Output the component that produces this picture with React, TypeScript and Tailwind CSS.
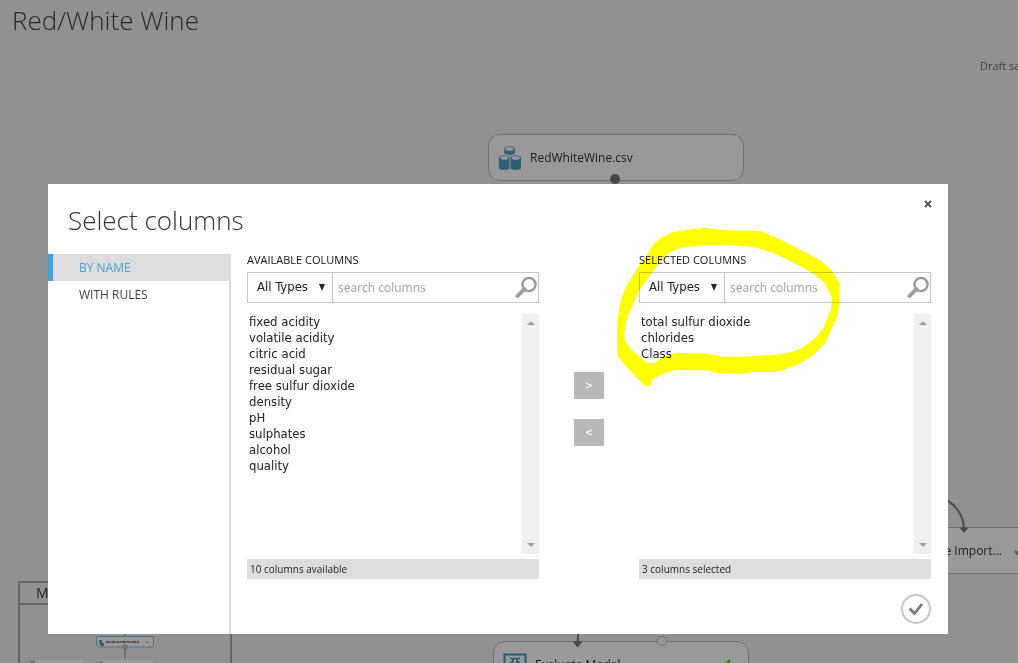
import React from "react";

const available = [
  "fixed acidity",
  "volatile acidity",
  "citric acid",
  "residual sugar",
  "free sulfur dioxide",
  "density",
  "pH",
  "sulphates",
  "alcohol",
  "quality",
];
const selected = ["total sulfur dioxide", "chlorides", "Class"];

function Cylinder({ x, y }: { x: number; y: number }) {
  return (
    <g transform={`translate(${x} ${y})`}>
      <path d="M0 3 C0 -.8 10.6 -.8 10.6 3 V13 C10.600 15.600 0 15.600 0 13Z" fill="#4f9fc4" />
      <ellipse cx="5.3" cy="2.9" rx="4.100" ry="1.800" fill="#fff" />
    </g>
  );
}

function DatasetIcon() {
  return (
    <svg width="24" height="25" viewBox="0 0 24 25" aria-hidden="true">
      <Cylinder x={6.3} y={1} />
      <path d="M0 12.500C0 8 12 8 12 11.500 12 8 24 8 24 12.500V17H0z" fill="#fff" />
      <Cylinder x={0.8} y={10} />
      <Cylinder x={12.4} y={10} />
    </svg>
  );
}

function EvaluateIcon() {
  return (
    <svg width="24" height="24" viewBox="0 0 24 24" fill="none" stroke="#3f97c3" aria-hidden="true">
      <rect x="1.5" y="1.5" width="21" height="21" strokeWidth="2" />
      <path d="M7 5.5h10M10 6v13M14 6v13M7 9h3M14 9h3" strokeWidth="1.6" />
    </svg>
  );
}

function GreenCheck() {
  return (
    <svg width="14" height="14" viewBox="0 0 14 14" aria-hidden="true">
      <path d="M1 7l4 4 8-9" fill="none" stroke="#77b81f" strokeWidth="2.6" />
    </svg>
  );
}

function Canvas() {
  return (
    <main className="absolute inset-0 overflow-hidden bg-[#f2f2f2]">
      <header>
        <h1 className="pl-3 text-[26px] leading-10 font-light text-[#444]">Red/White Wine</h1>
      </header>
      <p className="absolute top-[58px] left-[980px] text-[11px] leading-4 whitespace-nowrap text-[#666]">Draft sa</p>

      <div className="absolute top-[134px] left-[488px] flex h-[47px] w-64 items-center gap-2 rounded-xl border border-[#b8b8b8] bg-white pl-[9px] text-xs text-[#333]">
        <DatasetIcon />
        <span>RedWhiteWine.csv</span>
        <span className="absolute -bottom-1 left-[121px] size-[10px] rounded-full bg-[#777]" />
      </div>

      <div className="absolute top-[527px] left-[787px] flex h-[47px] w-64 items-center rounded-xl border border-[#b8b8b8] bg-white text-xs text-[#333]">
        <span className="ml-auto pr-[40px]">e Import...</span>
        <span className="absolute top-4 left-[226px]">
          <GreenCheck />
        </span>
      </div>
      <svg className="absolute top-[490px] left-[930px]" width="50" height="50" aria-hidden="true">
        <path d="M10 7C26 13 34 26 34 39" fill="none" stroke="#7d7d7d" strokeWidth="2" />
        <path d="M29.500 37.500h9L34 43z" fill="#777" />
      </svg>

      <div className="absolute top-[641px] left-[493px] flex h-[47px] w-64 items-center gap-2 rounded-xl border border-[#b8b8b8] bg-white pl-[9px] text-xs text-[#333]">
        <EvaluateIcon />
        <span>Evaluate Model</span>
        <span className="absolute -top-1.5 left-[163px] size-[10px] rounded-full border border-[#b5b5b5] bg-white" />
        <span className="absolute top-4 left-[223px]">
          <GreenCheck />
        </span>
      </div>
      <svg className="absolute top-[625px] left-[560px]" width="40" height="30" aria-hidden="true">
        <path d="M19 0L17.500 17" fill="none" stroke="#7d7d7d" strokeWidth="2" />
        <path d="M12.500 16.500h10L17.500 22.500z" fill="#777" />
      </svg>

      <section className="absolute top-[581px] left-[18px] h-[120px] w-[214px] border-2 border-[#aaa]">
        <h2 className="h-[22px] border-b-2 border-[#aaa] pl-4 text-sm leading-5 text-[#333]">M</h2>
        <svg width="210" height="60" viewBox="20 605 210 60" aria-hidden="true">
          <path d="M125 630v34" stroke="#aaa" strokeWidth="1.500" />
          <rect x="96.500" y="636.500" width="57" height="10.500" rx="2" fill="#fff" stroke="#8ab9d4" />
          <path d="M99 640h3v3h2v3h-4z" fill="#4f9fc4" />
          <path d="M106 642h33" stroke="#666" strokeWidth="1.700" strokeDasharray="3 .6 1.500 .5 4 .7" />
          <path d="M146 642l1 1 2-2" fill="none" stroke="#77b81f" />
          <circle cx="125" cy="647" r="2.300" fill="#eee" stroke="#999" />
          <circle cx="125" cy="647" r=".8" fill="#c66" />
          <rect x="28" y="659" width="57" height="12" rx="2" fill="#fff" stroke="#e5e5e5" />
          <rect x="97" y="659" width="57" height="12" rx="2" fill="#fff" stroke="#e5e5e5" />
          <path d="M30 661.500h5M99 662.500h4" stroke="#9bc" strokeWidth="2" />
        </svg>
      </section>
    </main>
  );
}

function ColumnPanel({ id, title, items, status }: { id: string; title: string; items: string[]; status: string }) {
  return (
    <section className="flex w-[292px] flex-col">
      <h3 className="h-[18px] text-[11px] leading-3 text-[#111]">{title}</h3>
      <div className="flex h-[31px]">
        <div className="relative w-[86px] shrink-0 border border-[#c6c6c6]">
          <select
            id={`${id}-type`}
            aria-label={`${title} type`}
            className="h-full w-full appearance-none bg-transparent pb-0.5 pl-[9px] font-['DejaVu_Sans_Condensed','Noto_Sans',sans-serif] text-[13px] text-[#222] outline-none"
          >
            <option>All Types</option>
          </select>
          <svg className="pointer-events-none absolute top-[11px] right-[7px]" width="6" height="7" aria-hidden="true">
            <path d="M0 0h6L3 7z" fill="#222" />
          </svg>
        </div>
        <div className="-ml-px flex min-w-0 flex-1 items-center border border-[#c6c6c6]">
          <input
            id={`${id}-search`}
            type="search"
            aria-label={`Search ${title}`}
            placeholder="search columns"
            className="min-w-0 flex-1 bg-transparent pl-[5px] text-xs outline-none placeholder:text-[#a0a0a0]"
          />
          <button type="button" aria-label="Search" className="mr-px">
            <svg width="22" height="23" viewBox="0 0 22 23" fill="none" stroke="#999" aria-hidden="true">
              <circle cx="14" cy="8.500" r="6.600" strokeWidth="2.400" />
              <path d="M9.500 13L2.500 20" strokeWidth="3.800" strokeLinecap="round" />
            </svg>
          </button>
        </div>
      </div>
      <div className="mt-[11px] flex h-60">
        <ul className="flex-1 pl-0.5 font-['DejaVu_Sans_Condensed','Noto_Sans',sans-serif] text-[13px] leading-4 text-[#222]">
          {items.map((item) => (
            <li key={item}>{item}</li>
          ))}
        </ul>
        <div className="flex w-[17px] flex-col items-center justify-between bg-[#f0f0f0] py-[7px]" aria-hidden="true">
          <svg width="8" height="4">
            <path d="M0 4L4 0l4 4z" fill="#a0a0a0" />
          </svg>
          <svg width="8" height="4">
            <path d="M0 0h8L4 4z" fill="#a0a0a0" />
          </svg>
        </div>
      </div>
      <p className="mt-[5px] h-5 bg-[#ddd] pl-[3px] text-[10px] leading-5 text-[#222]">{status}</p>
    </section>
  );
}

function Dialog() {
  return (
    <div role="dialog" aria-labelledby="dialog-title" className="relative flex min-h-[450px] w-full max-w-[900px] flex-col bg-white">
      <header className="flex h-[70px] items-start justify-between pr-4 pl-5">
        <h2 id="dialog-title" className="pt-4 text-[26px] leading-10 font-light text-[#333]">Select columns</h2>
        <button type="button" aria-label="Close" className="mt-4">
          <svg width="8" height="8" viewBox="0 0 8 8" aria-hidden="true">
            <path d="M1 1l6 6M7 1L1 7" stroke="#555" strokeWidth="2" />
          </svg>
        </button>
      </header>
      <div className="flex flex-1">
        <nav className="flex w-[183px] shrink-0 flex-col border-r-2 border-[#ddd] text-xs">
          <a href="#by-name" className="h-[27px] border-l-[5px] border-[#4f9bd5] bg-[#ddd] pl-[26px] leading-[27px] text-[#4f9bd5]">BY NAME</a>
          <a href="#with-rules" className="h-[27px] pl-[31px] leading-[27px] text-[#444]">WITH RULES</a>
        </nav>
        <div className="flex flex-1 flex-col pr-[17px] pl-4">
          <div className="flex justify-between">
            <ColumnPanel id="available" title="AVAILABLE COLUMNS" items={available} status="10 columns available" />
            <div className="flex flex-col gap-5 pt-[118px]">
              <button type="button" aria-label="Add column" className="h-[27px] w-[30px] bg-[#b8b8b8] text-[13px] font-semibold text-white">&gt;</button>
              <button type="button" aria-label="Remove column" className="h-[27px] w-[30px] bg-[#b8b8b8] text-[13px] font-semibold text-white">&lt;</button>
            </div>
            <ColumnPanel id="selected" title="SELECTED COLUMNS" items={selected} status="3 columns selected" />
          </div>
          <button type="button" aria-label="Confirm" className="mt-[15px] self-end">
            <svg width="30" height="30" viewBox="0 0 30 30" fill="none" aria-hidden="true">
              <circle cx="15" cy="15" r="14" stroke="#c6c6c6" strokeWidth="2" />
              <path d="M8.500 14.500l5 5L21 10" stroke="#777" strokeWidth="2.800" />
            </svg>
          </button>
        </div>
      </div>
      <svg
        className="pointer-events-none absolute top-[36px] left-[552px] mix-blend-multiply"
        width="250"
        height="180"
        viewBox="0 0 750 540"
        aria-hidden="true"
      >
        <path
          fillRule="evenodd"
          fill="#ff0"
          d="M145 99L158 75 188 50 220 36 265 29 310 24 385 31 485 34 545 61 615 97 660 121 697 153 717 187 718 245 711 290 675 370 636 408 598 431 550 450 525 455 460 457 430 461 350 460 328 452 300 450 225 450 185 463 154 481 153 497H133L100 462 70 430 52 406 51 335 55 285 64 235 78 200 110 148ZM201 103L235 85 265 80 320 75 390 76 445 79 475 85 530 103 600 138 645 165 675 190 697 235 692 270 670 325 645 355 610 382 570 398 520 405 420 410 370 410 325 402 290 400 230 399 190 409 165 428 140 430 95 390 74 363 73 335 82 290 98 255 118 210 150 165 178 129Z"
        />
      </svg>
    </div>
  );
}

export default function App() {
  return (
    <div className="relative min-h-screen overflow-hidden font-['Open_Sans','Noto_Sans',sans-serif]">
      <Canvas />
      <div className="absolute inset-0 bg-black/40" />
      <div className="relative pt-46 pr-12 pl-12">
        <Dialog />
      </div>
    </div>
  );
}
